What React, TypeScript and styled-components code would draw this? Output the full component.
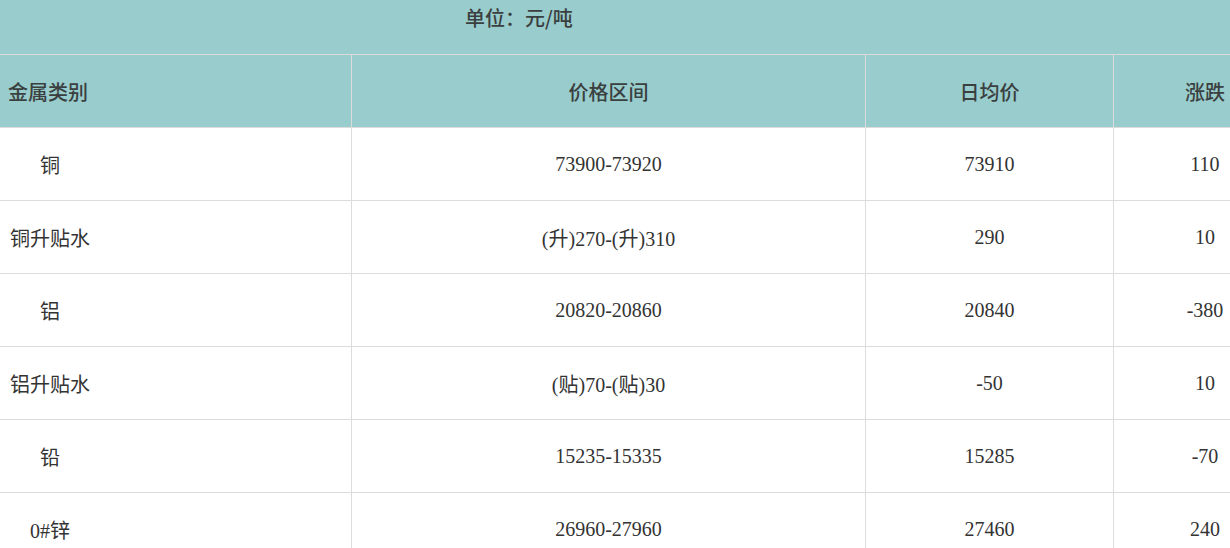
import React from 'react'
import styled, { createGlobalStyle } from 'styled-components'

const GlobalStyle = createGlobalStyle`
    html, body {
        margin: 0;
        padding: 0;
        overflow: hidden;
        background: #fff;
    }
    body {
        font-family: "Liberation Serif", "Noto Sans CJK SC", serif;
        font-size: 20px;
        color: #333;
    }
`

const COLS = '352px 514px 248px 182px'
const LINE = '#dcdcdc'
const TEAL = '#99cccc'

const Viewport = styled.div`
    width: 100%;
    overflow: hidden;
`

const Wrap = styled.div`
    width: 1296px;
`

const Banner = styled.div`
    height: 54px;
    background: ${TEAL};
    border-bottom: 1px solid ${LINE};
    padding-left: 465px;
    line-height: 36px;
    font-family: "Noto Sans CJK SC", sans-serif;
    font-weight: 500;
    color: #3a3f3f;
`

const Row = styled.div<{head?: boolean}>`
    display: grid;
    grid-template-columns: ${COLS};
    height: 73px;
    border-bottom: 1px solid ${LINE};
    box-sizing: border-box;
    ${({head}) => head && `
        background: ${TEAL};
        font-family: "Noto Sans CJK SC", sans-serif;
        font-weight: 500;
        color: #3a3f3f;
    `}
`

const Cell = styled.div<{align?: 'left' | 'center'; last?: boolean}>`
    display: flex;
    align-items: center;
    justify-content: ${({align}) => align === 'left' ? 'flex-start' : 'center'};
    border-right: ${({last}) => last ? 'none' : `1px solid ${LINE}`};
    padding-left: ${({align}) => align === 'left' ? '8px' : '0'};
    box-sizing: border-box;
    white-space: nowrap;
`

const Name = styled.span`
    display: inline-block;
    width: 80px;
    margin-left: 2px;
    text-align: center;
    font-family: "Liberation Serif", "Noto Sans CJK SC", serif;
`

const rows = [
    { name: '铜', range: '73900-73920', avg: '73910', diff: '110' },
    { name: '铜升贴水', range: '(升)270-(升)310', avg: '290', diff: '10' },
    { name: '铝', range: '20820-20860', avg: '20840', diff: '-380' },
    { name: '铝升贴水', range: '(贴)70-(贴)30', avg: '-50', diff: '10' },
    { name: '铅', range: '15235-15335', avg: '15285', diff: '-70' },
    { name: '0#锌', range: '26960-27960', avg: '27460', diff: '240' },
]

export default function App() {
    return (
        <Viewport>
            <GlobalStyle />
            <Wrap>
                <Banner>单位：元/吨</Banner>
                <Row head>
                    <Cell align={'left'}>金属类别</Cell>
                    <Cell>价格区间</Cell>
                    <Cell>日均价</Cell>
                    <Cell last>涨跌</Cell>
                </Row>
                {rows.map(r => (
                    <Row key={r.name}>
                        <Cell align={'left'}><Name>{r.name}</Name></Cell>
                        <Cell>{r.range}</Cell>
                        <Cell>{r.avg}</Cell>
                        <Cell last>{r.diff}</Cell>
                    </Row>
                ))}
            </Wrap>
        </Viewport>
    )
}
